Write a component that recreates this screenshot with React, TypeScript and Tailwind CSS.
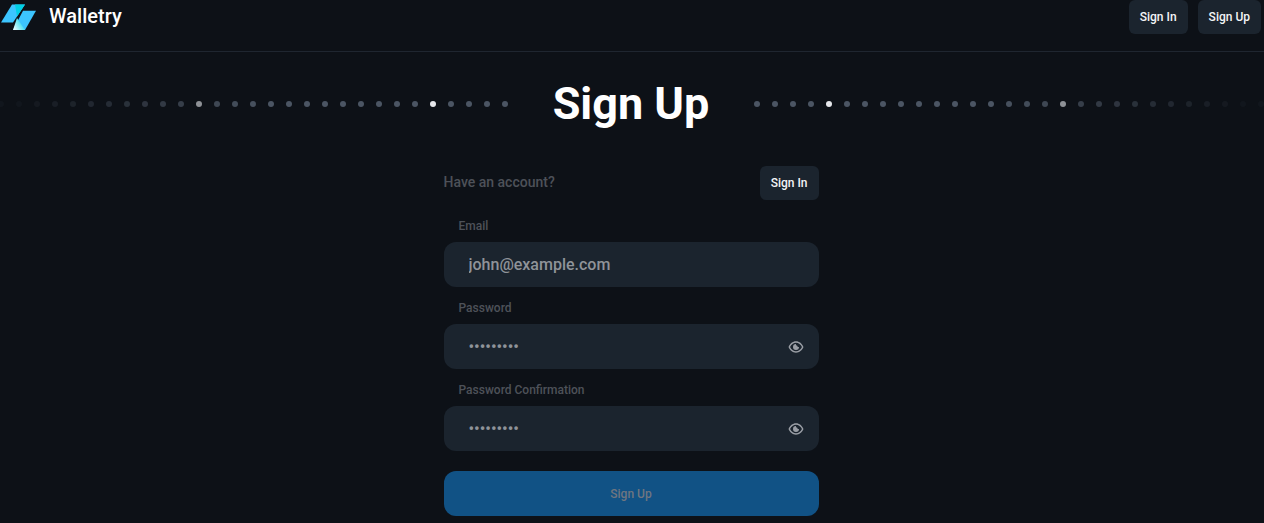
const dotSteps = Array.from({ length: 29 }, (_, i) => i);

function DotRow({ side }: { side: 'left' | 'right' }) {
  return (
    <div className={`flex gap-3 ${side === 'left' ? 'justify-end' : 'justify-start'}`}>
      {dotSteps.map((i) => {
        // i counts outward from the title
        const step = side === 'left' ? 28 - i : i;
        const bright = step === 4 || step === 17;
        const opacity = step < 14 ? 1 : Math.max(0.08, 1 - (step - 13) / 15);
        return (
          <span
            key={i}
            className={`h-1.5 w-1.5 shrink-0 rounded-full ${bright ? 'bg-[#e5e7eb]' : 'bg-[#4b5563]'}`}
            style={{ opacity: bright && step > 4 ? 0.6 : opacity }}
          />
        );
      })}
    </div>
  );
}

function Logo() {
  return (
    <svg width="36" height="32" viewBox="0 0 36 32" aria-hidden="true">
      <defs>
        <linearGradient id="lightTip" x1="0.1" y1="0.9" x2="0.9" y2="0.4">
          <stop offset="0" stopColor="#e0fcff" />
          <stop offset="1" stopColor="#1fd8ee" />
        </linearGradient>
      </defs>
      <path d="M12 4.500H25L13 22.500H1Z" fill="#3cc5ff" />
      <path d="M15 4.500H25L17 16.500Z" fill="#00d0e4" />
      <path d="M23 10.700H36L25 30H13Z" fill="#3cc5ff" />
      <path d="M17 18L25 30H13Z" fill="url(#lightTip)" />
    </svg>
  );
}

function EyeIcon() {
  return (
    <svg width="16" height="16" viewBox="0 0 24 24" fill="#9a9ea5" aria-hidden="true">
      <path
        fillRule="evenodd"
        d="M12 3.500C7 3.500 2.700 7 .8 12c1.900 5 6.200 8.500 11.200 8.500s9.300-3.500 11.200-8.500C21.300 7 17 3.500 12 3.500zM12 5.700c3.800 0 7.200 2.500 8.900 6.300-1.700 3.800-5.100 6.300-8.900 6.300S4.800 15.800 3.100 12C4.800 8.200 8.200 5.700 12 5.700z"
      />
      <path d="M12 7.500a4.500 4.500 0 1 0 4.500 4.500 1.800 1.800 0 0 1-2.500-2 2 2 0 0 1-2-2.500z" />
    </svg>
  );
}

function SmallButton({ label }: { label: string }) {
  return (
    <button type="button" className="h-[34px] rounded-md bg-[#1b242e] px-[11px] text-xs font-medium text-[#f3f4f6]">
      {label}
    </button>
  );
}

function Field({ label, type, value }: { label: string; type: string; value: string }) {
  return (
    <div className="flex flex-col">
      <label className="mb-[7px] pl-[15px] text-xs font-medium leading-[18px] text-[#4d5159]">{label}</label>
      <div className="flex h-[45px] items-center rounded-xl bg-[#1b242e] pl-[25px] pr-[15px]">
        <input
          readOnly
          type={type}
          value={value}
          className="min-w-0 flex-1 bg-transparent text-base font-medium text-[#8f9399] outline-none"
        />
        {type === 'password' && <EyeIcon />}
      </div>
    </div>
  );
}

export default function App() {
  return (
    <div className="h-[523px] overflow-hidden bg-[#0d1117] font-['Roboto',sans-serif]">
      <header className="flex h-[52px] items-start justify-between border-b border-[#1f2630] pr-[3px]">
        <div className="flex items-center gap-[13px]">
          <Logo />
          <span className="-mt-[1px] text-xl font-medium text-white">Walletry</span>
        </div>
        <div className="flex gap-2.5">
          <SmallButton label="Sign In" />
          <SmallButton label="Sign Up" />
        </div>
      </header>

      <div className="mt-[17px] flex h-[70px] items-center overflow-hidden">
        <div className="w-[508px] shrink-0 overflow-hidden">
          <DotRow side="left" />
        </div>
        <h1 className="w-[246px] shrink-0 text-center text-[45px] font-bold text-white">Sign Up</h1>
        <div className="flex-1 overflow-hidden">
          <DotRow side="right" />
        </div>
      </div>

      <form className="ml-[443.5px] mt-[27px] flex w-[375px] flex-col">
        <div className="flex items-center justify-between">
          <span className="-mt-[2px] text-sm font-medium text-[#4d5159]">Have an account?</span>
          <SmallButton label="Sign In" />
        </div>
        <div className="mt-[17px] flex flex-col gap-3">
          <Field label="Email" type="email" value="john@example.com" />
          <Field label="Password" type="password" value="password1" />
          <Field label="Password Confirmation" type="password" value="password1" />
        </div>
        <button type="button" className="mt-5 h-[45px] rounded-xl bg-[#115285] text-xs font-medium text-[#6f7680]">
          Sign Up
        </button>
      </form>
    </div>
  );
}
